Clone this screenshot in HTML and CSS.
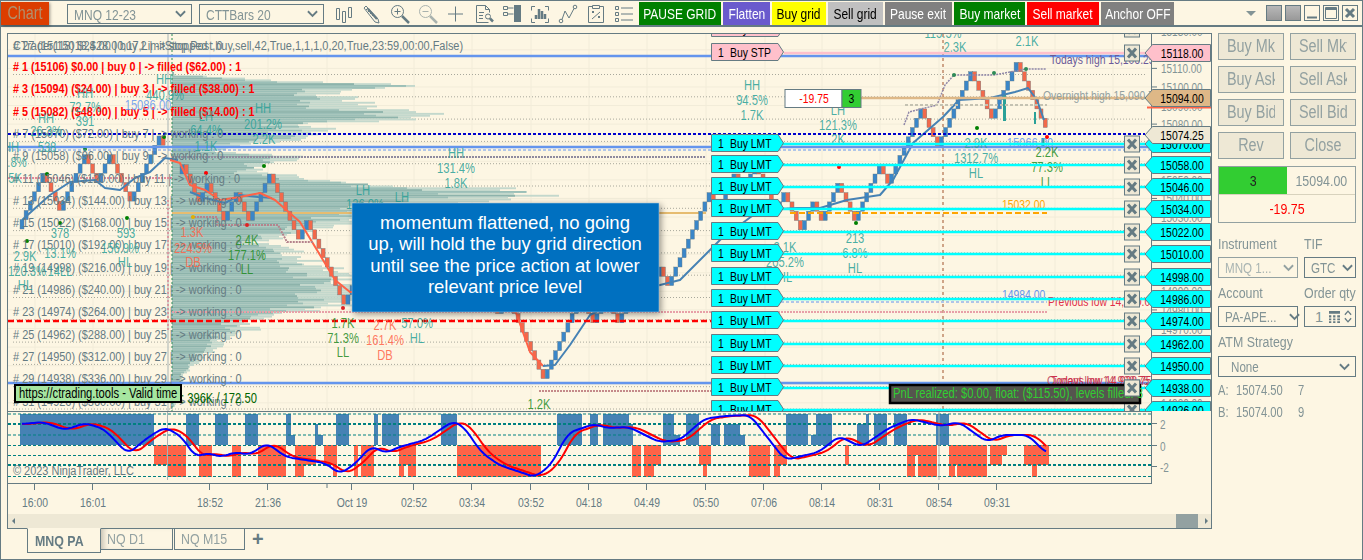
FILE: index.html
```html
<!DOCTYPE html>
<html lang="en">
<head>
    <meta charset="UTF-8">
    <title>MNQ 12-23 - Chart</title>
    <link rel="stylesheet" href="styles.css">
</head>
<body>
    <div class="window">
        <div class="toolbar">
            <div class="chart-tag"><span class="sq">Chart</span></div>
            <div class="select tool-select"><span class="sq sq-left">MNQ 12-23</span><svg class="chevron" viewBox="0 0 12 8"><path d="M1 1l5 5 5-5"/></svg></div>
            <div class="select tool-select"><span class="sq sq-left">CTTBars 20</span><svg class="chevron" viewBox="0 0 12 8"><path d="M1 1l5 5 5-5"/></svg></div>

            <div class="tool-icons">
                <svg viewBox="0 0 22 22"><path d="M3.5 5.5h3v11h-3zM9.5 8.5h3v11h-3zM15.5 4.5h3v10h-3z"/></svg>
                <svg viewBox="0 0 22 22"><path class="thick" d="M7 6l9 10"/><path d="M3 5l2-2 12 13 1 4-4-1zM5 7l2-2M7 9l2-2M9 11l2-2M11 13l2-2"/></svg>
                <svg viewBox="0 0 22 22"><circle cx="8.5" cy="8.5" r="6"/><path d="M5.5 8.5h6M8.5 5.5v6"/><path class="thick" d="M13 13l7 7"/></svg>
                <svg class="dim" viewBox="0 0 22 22"><circle cx="8.5" cy="8.5" r="6"/><path d="M5.5 8.5h6"/><path class="thick" d="M13 13l7 7"/></svg>
                <svg viewBox="0 0 22 22"><path d="M3 11h15M10.5 3.5v15"/></svg>
                <svg viewBox="0 0 22 22"><path d="M3.5 2.5h9l4 4v3M3.5 2.5v17h12M12.5 2.5v4h4M6 9.5h5M6 12.5h4M6 15.5h4"/><circle cx="15" cy="13.5" r="2.5"/><path class="thick" d="M17 15.5l3 3"/></svg>
                <svg viewBox="0 0 22 22"><path d="M2.5 3.5h4v3h-4zM2.5 9.5h4v3h-4zM6.5 5h6M6.5 11h6"/><path class="solid" d="M13 2h7v17h-7z"/></svg>
                <svg viewBox="0 0 22 22"><path d="M6 3.5H2.5v4M16 3.5h3.5v4M6 19.5H2.5v-4M16 19.5h3.5v-4"/><path class="thick" d="M7 16v-4M10 16V6M13 16V8M16 16v-5"/></svg>
                <svg viewBox="0 0 22 22"><circle cx="4" cy="18" r="1.8"/><circle cx="18" cy="4" r="1.8"/><path d="M5 16.5l3-8.5 4 7 5-9.5"/></svg>
                <svg viewBox="0 0 22 22"><path d="M7.5 3.5h-4v16h15v-16h-4M7.5 2.5h7v3h-7zM7 8l2 2M9 8l-2 2M13 13l2 2M15 13l-2 2M7 16l8-7"/></svg>
                <svg viewBox="0 0 22 22"><path d="M2.5 3.5h3v3h-3zM2.5 9.5h3v3h-3zM2.5 15.5h3v3h-3zM8 5h12M8 11h12M8 17h12"/></svg>
            </div>

            <div class="tool-buttons">
                <div class="tool-btn btn-pause"><span class="sq">PAUSE GRID</span></div>
                <div class="tool-btn btn-flatten"><span class="sq">Flatten</span></div>
                <div class="tool-btn btn-buygrid"><span class="sq">Buy grid</span></div>
                <div class="tool-btn btn-sellgrid"><span class="sq">Sell grid</span></div>
                <div class="tool-btn btn-exit"><span class="sq">Pause exit</span></div>
                <div class="tool-btn btn-buymkt"><span class="sq">Buy market</span></div>
                <div class="tool-btn btn-sellmkt"><span class="sq">Sell market</span></div>
                <div class="tool-btn btn-anchor"><span class="sq">Anchor OFF</span></div>
            </div>

            <div class="window-controls">
                <div class="menu-arrow"></div>
                <div class="win-btn win-gray"></div>
                <div class="win-btn win-gray"></div>
                <div class="win-btn"><svg viewBox="0 0 14 14"><path d="M2 11.5h10" stroke-width="2"/></svg></div>
                <div class="win-btn"><svg viewBox="0 0 14 14"><path d="M1.5 1.5h11v11h-11z"/><path d="M1.5 3h11" stroke-width="2"/></svg></div>
                <div class="win-btn"><svg viewBox="0 0 14 14"><path d="M3 3l8 8M11 3l-8 8" stroke-width="3"/></svg></div>
            </div>
        </div>

        <div class="workspace">
            <div class="chart-column">
                <div class="chart-panel">
                    <svg id="price-pane" class="pane" viewBox="8 34 1203 377" width="1203" height="377"></svg>
                    <svg id="indicator-pane" class="pane" viewBox="8 411 1203 73" width="1203" height="73"></svg>
                    <svg id="time-pane" class="pane" viewBox="8 484 1203 30" width="1203" height="30"></svg>
                    <div class="scrollbar">
                        <div class="scroll-arrow arrow-left"></div>
                        <div class="scroll-thumb"></div>
                        <div class="scroll-arrow arrow-right"></div>
                    </div>
                </div>
                <div class="tabs">
                    <div class="tab tab-active"><span class="sq sq-left">MNQ PA</span></div>
                    <div class="tab tab-second"><span class="sq sq-left">NQ D1</span></div>
                    <div class="tab tab-third"><span class="sq sq-left">NQ M15</span></div>
                    <div class="tab-add">+</div>
                </div>
            </div>

            <div class="side-panel">
                <div class="order-buttons">
                    <div class="order-btn"><span class="order-label"><span class="sq sq-left">Buy Mkt</span></span></div>
                    <div class="order-btn"><span class="order-label"><span class="sq sq-left">Sell Mkt</span></span></div>
                    <div class="order-btn"><span class="order-label"><span class="sq sq-left">Buy Ask</span></span></div>
                    <div class="order-btn"><span class="order-label"><span class="sq sq-left">Sell Ask</span></span></div>
                    <div class="order-btn"><span class="order-label"><span class="sq sq-left">Buy Bid</span></span></div>
                    <div class="order-btn"><span class="order-label"><span class="sq sq-left">Sell Bid</span></span></div>
                    <div class="order-btn order-big"><span class="sq">Rev</span></div>
                    <div class="order-btn order-big"><span class="sq">Close</span></div>
                </div>

                <div class="position-box">
                    <div class="position-row">
                        <div class="position-qty"><span class="sq">3</span></div>
                        <div class="position-price"><span class="sq">15094.00</span></div>
                    </div>
                    <div class="position-pnl"><span class="sq">-19.75</span></div>
                </div>

                <div class="field-row field-instrument">
                    <div class="field field-wide">
                        <label><span class="sq sq-left">Instrument</span></label>
                        <div class="select select-disabled"><span class="sq sq-left">MNQ 1...</span><svg class="chevron" viewBox="0 0 12 8"><path d="M1 1l5 5 5-5"/></svg></div>
                    </div>
                    <div class="field field-narrow">
                        <label><span class="sq sq-left">TIF</span></label>
                        <div class="select"><span class="sq sq-left">GTC</span><svg class="chevron" viewBox="0 0 12 8"><path d="M1 1l5 5 5-5"/></svg></div>
                    </div>
                </div>
                <div class="field-row">
                    <div class="field field-wide">
                        <label><span class="sq sq-left">Account</span></label>
                        <div class="select"><span class="sq sq-left">PA-APE...</span><svg class="chevron" viewBox="0 0 12 8"><path d="M1 1l5 5 5-5"/></svg></div>
                    </div>
                    <div class="field field-narrow">
                        <label><span class="sq sq-left">Order qty</span></label>
                        <div class="select qty-input">
                            <span class="qty-value">1</span>
                            <svg class="calc" viewBox="0 0 12 13"><path d="M0 0h12v3H0zM0 4.5h2.5V7H0zM4.5 4.5H7V7H4.5zM9 4.5h3V7H9zM0 8h2.5v2H0zM4.5 8H7v2H4.5zM9 8h3v2H9zM0 11h2.5v2H0zM4.5 11H7v2H4.5zM9 11h3v2H9z"/></svg>
                            <svg class="spin" viewBox="0 0 9 16"><path d="M1 6l3.5-4L8 6M1 10l3.5 4L8 10"/></svg>
                        </div>
                    </div>
                </div>
                <div class="field">
                    <label><span class="sq sq-left">ATM Strategy</span></label>
                    <div class="select select-atm"><span class="sq sq-left">None</span><svg class="chevron" viewBox="0 0 12 8"><path d="M1 1l5 5 5-5"/></svg></div>
                </div>

                <div class="quote"><span class="quote-side"><span class="sq sq-left">A:</span></span><span class="quote-price"><span class="sq sq-left">15074.50</span></span><span class="sq sq-left">7</span></div>
                <div class="quote"><span class="quote-side"><span class="sq sq-left">B:</span></span><span class="quote-price"><span class="sq sq-left">15074.00</span></span><span class="sq sq-left">9</span></div>
            </div>
        </div>
    </div>

    <script src="script.js"></script>
</body>
</html>
```

FILE: styles.css
```css
* {
    margin: 0;
    padding: 0;
    box-sizing: border-box;
}

body {
    background: #fdf6e3;
    color: #657b83;
    font-family: "Liberation Sans", sans-serif;
    overflow: hidden;
}

.window {
    width: 1363px;
    height: 560px;
    border: 1px solid #657b83;
    background: #fdf6e3;
    overflow: hidden;
}

/* the capture is squeezed sideways, so is all its text */
.sq {
    display: inline-block;
    flex-shrink: 0;
    white-space: nowrap;
    transform: scaleX(0.8);
}

.sq-left {
    transform-origin: left center;
}

/* toolbar */
.toolbar {
    height: 26px;
    border-bottom: 2px solid #657b83;
    display: flex;
    align-items: flex-start;
}

.chart-tag {
    width: 48px;
    height: 23px;
    margin-top: 1px;
    background: #dc3d00;
    color: #b0906e;
    font-size: 18px;
    line-height: 23px;
    display: flex;
    justify-content: center;
    box-shadow: 1px 1px 3px rgba(0, 0, 0, 0.4);
}

.select {
    display: flex;
    align-items: center;
    justify-content: space-between;
    border: 1px solid #657b83;
    font-size: 14.5px;
    color: #839496;
    padding: 0 5px 0 6px;
}

.tool-select {
    width: 125px;
    height: 20px;
    margin: 3px 0 0 7px;
    font-size: 15px;
}

.tool-select:nth-child(2) {
    margin-left: 18px;
}

.chevron {
    flex-shrink: 0;
    width: 11px;
    height: 8px;
    fill: none;
    stroke: #657b83;
    stroke-width: 2;
}

.tool-icons {
    display: flex;
    gap: 6px;
    margin: 2px 0 0 9px;
}

.tool-icons svg {
    width: 22px;
    height: 22px;
    fill: none;
    stroke: #657b83;
    stroke-width: 1;
}

.tool-icons svg.dim {
    opacity: 0.55;
}

.tool-icons .thick {
    stroke-width: 2.5;
}

.tool-icons .solid {
    fill: #657b83;
    stroke: none;
}

.tool-buttons {
    display: flex;
    gap: 2px;
    margin: 1px 0 0 4px;
}

.tool-btn {
    height: 23px;
    line-height: 23px;
    font-size: 15px;
    color: #fff;
    display: flex;
    justify-content: center;
}

.btn-pause { width: 82px; background: #008000; }
.btn-flatten { width: 47px; background: #6a5acd; }
.btn-buygrid { width: 54px; background: #ffff00; color: #000; }
.btn-sellgrid { width: 55px; background: #c0c0c0; color: #000; }
.btn-exit { width: 67px; background: #808080; }
.btn-buymkt { width: 71px; background: #008000; }
.btn-sellmkt { width: 72px; background: #ff0000; }
.btn-anchor { width: 73px; background: #808080; }

.window-controls {
    display: flex;
    align-items: center;
    gap: 3px;
    margin: 4px 0 0 auto;
    padding-right: 4px;
}

.menu-arrow {
    width: 0;
    height: 0;
    border-left: 5px solid transparent;
    border-right: 5px solid transparent;
    border-top: 5px solid #839496;
    margin-right: 7px;
}

.win-btn {
    width: 16px;
    height: 16px;
    border: 1px solid #657b83;
}

.win-btn svg {
    display: block;
    width: 14px;
    height: 14px;
    fill: none;
    stroke: #657b83;
}

.win-gray {
    background: linear-gradient(#b8b8b8, #999);
}

/* main area */
.workspace {
    display: flex;
    margin-top: 6px;
}

.chart-column {
    margin-left: 6px;
    width: 1205px;
}

.chart-panel {
    border: 1px solid #657b83;
    height: 496px;
}

.pane {
    display: block;
    font-family: "Liberation Sans", sans-serif;
}

.scrollbar {
    height: 14px;
    background: #eee8d5;
    display: flex;
    align-items: center;
}

.scroll-arrow {
    width: 0;
    height: 0;
    border-top: 3px solid transparent;
    border-bottom: 3px solid transparent;
}

.arrow-left {
    border-right: 3px solid #657b83;
    margin-left: 4px;
}

.arrow-right {
    border-left: 3px solid #657b83;
    margin: 0 3px 0 7px;
}

.scroll-thumb {
    width: 22px;
    height: 14px;
    background: #93a1a1;
    margin-left: auto;
}

.tabs {
    display: flex;
    margin: -1px 0 0 20px;
    font-size: 15.5px;
}

.tab {
    border: 1px solid #657b83;
    border-top-color: transparent;
    height: 22px;
    line-height: 20px;
    color: #93a1a1;
    padding-left: 6px;
}

.tab-active {
    width: 74px;
    height: 25px;
    line-height: 24px;
    padding-left: 7px;
    font-weight: bold;
    color: #657b83;
    background: #fdf6e3;
}

.tab-second {
    width: 72px;
    border-left: none;
    box-shadow: inset 6px 0 6px -4px rgba(0, 0, 0, 0.25);
}

.tab-third {
    width: 71px;
    margin-left: 1px;
}

.tab-add {
    margin-left: 7px;
    font-size: 20px;
    font-weight: bold;
    line-height: 22px;
}

/* right panel */
.side-panel {
    width: 138px;
    margin-left: 6px;
    font-size: 14px;
    color: #839496;
}

.order-buttons {
    display: grid;
    grid-template-columns: 66px 66px;
    grid-auto-rows: 27px;
    justify-content: space-between;
    row-gap: 6px;
}

.order-btn {
    border: 1px solid #93a1a1;
    background: #eee8d5;
    font-size: 18px;
    color: #93a1a1;
    display: flex;
    align-items: center;
    padding-left: 8px;
}

.order-label {
    display: block;
    width: 48px;
    overflow: hidden;
    white-space: nowrap;
}

.order-big {
    justify-content: center;
    padding-left: 0;
}

.position-box {
    margin-top: 7px;
    border: 1px solid #93a1a1;
    height: 57px;
}

.position-row {
    display: flex;
    height: 28px;
    border-bottom: 1px solid #d8d2bd;
    line-height: 27px;
    font-size: 15.5px;
}

.position-qty {
    width: 68px;
    background: #32cd32;
    color: #222;
    display: flex;
    justify-content: center;
}

.position-price {
    flex: 1;
    display: flex;
    justify-content: center;
}

.position-pnl {
    display: flex;
    justify-content: center;
    color: #ff0000;
    font-size: 15.5px;
    line-height: 28px;
}

.field-row {
    display: flex;
    justify-content: space-between;
}

.field-instrument {
    margin-top: 12px;
}

.field label {
    display: block;
    height: 22px;
    line-height: 17px;
    font-size: 15.5px;
}

.field {
    margin-bottom: 6px;
}

.field .select {
    height: 21px;
}

.field-wide {
    width: 80px;
}

.field-narrow {
    width: 52px;
}

.select-disabled {
    border-color: #93a1a1;
    color: #a9b4b2;
}

.select-disabled .chevron {
    stroke: #93a1a1;
}

.select-atm {
    padding-left: 12px;
    margin-top: 1px;
}

.qty-input {
    justify-content: flex-start;
    padding-right: 3px;
}

.qty-value {
    margin-left: 4px;
    flex: 1;
}

.calc {
    width: 11px;
    height: 12px;
    fill: #657b83;
    margin-right: 4px;
}

.spin {
    width: 8px;
    height: 15px;
    fill: none;
    stroke: #657b83;
    stroke-width: 1.5;
}

.quote {
    display: flex;
    height: 22px;
    line-height: 22px;
    font-size: 14px;
}

.field + .quote {
    margin-top: -4px;
}

.quote-side {
    width: 18px;
}

.quote-price {
    width: 62px;
}

/* chart svg text */
.row-text { fill: #657b83; font-size: 13.7px; }
.row-filled { fill: #ff0000; font-size: 13.5px; font-weight: bold; }
.tick-text { fill: #839496; font-size: 12.5px; }
.zz { font-size: 14px; text-anchor: middle; fill: #2aa198; fill-opacity: 0.85; }
.zz-green { fill: #228b22; }
.zz-orange { fill: #ff6347; }
.zz-blue { fill: #6495ed; }
.note { font-size: 13px; }
.note-big { font-size: 14px; }
.chip-text { font-size: 13px; fill: #000; }
.label-text { font-size: 13px; fill: #000; text-anchor: middle; }
.callout-text { font-size: 18.5px; fill: #fff; text-anchor: middle; }
.time-text { fill: #657b83; font-size: 13px; text-anchor: middle; }
```

FILE: script.js
```js
// builds the three chart panes from the price data

const ROW_H = 22.3;
const SQUEEZE = 0.8;

function priceY(p) {
    return 165 + (15058 - p) * 1.858;
}

function lerp(points, x) {
    if (x <= points[0][0]) return points[0][1];
    for (let i = 1; i < points.length; i++) {
        if (x <= points[i][0]) {
            const a = points[i - 1], b = points[i];
            return a[1] + (b[1] - a[1]) * (x - a[0]) / (b[0] - a[0]);
        }
    }
    return points[points.length - 1][1];
}

function rand(i) {
    const v = Math.sin(i * 12.9898) * 43758.5453;
    return v - Math.floor(v);
}

function line(x1, y1, x2, y2, color, width, dash) {
    return `<line x1="${x1}" y1="${y1}" x2="${x2}" y2="${y2}" stroke="${color}" stroke-width="${width}"${dash ? ` stroke-dasharray="${dash}"` : ''}/>`;
}

function poly(points, color, width, dash) {
    const d = points.map(p => p.join(',')).join(' ');
    return `<polyline points="${d}" fill="none" stroke="${color}" stroke-width="${width}" stroke-linejoin="round"${dash ? ` stroke-dasharray="${dash}"` : ''}/>`;
}

function text(x, y, s, cls, color) {
    return `<text transform="translate(${x} ${y}) scale(${SQUEEZE} 1)" class="${cls}"${color ? ` style="fill:${color}"` : ''}>${s}</text>`;
}

// --- price pane data ---
const pricePath = [
    [20, 229], [38, 192], [42, 180], [55, 210], [63, 190], [72, 170], [80, 160], [85, 163], [88, 173], [93, 183],
    [102, 163], [107, 170], [113, 190], [122, 210], [128, 193], [135, 180], [145, 160], [155, 152], [160, 143], [165, 155]
];
const pricePath2 = [
    [180, 183], [188, 207], [192, 195], [203, 183], [217, 213], [230, 185], [243, 217], [258, 175], [267, 187],
    [277, 217], [285, 237], [297, 220], [305, 222], [322, 268], [335, 300], [341, 305], [351, 270], [400, 285],
    [450, 265], [490, 285], [504, 312], [513, 340], [535, 385], [543, 365], [556, 335], [570, 312], [600, 312],
    [630, 300], [665, 280], [680, 255], [700, 215], [712, 205], [745, 180], [760, 180], [780, 205], [800, 215],
    [820, 215], [835, 185], [852, 218], [870, 190], [885, 175], [900, 130], [915, 118], [935, 135], [950, 90],
    [965, 75], [975, 105], [995, 105], [1012, 75], [1030, 90], [1045, 137]
];
const orangeMa = [
    [170, 160], [180, 163], [190, 185], [205, 190], [220, 200], [240, 197], [260, 193], [275, 200], [300, 222],
    [320, 255], [335, 280], [350, 292], [440, 290], [500, 290], [515, 310], [530, 352], [543, 366]
];
const blueMa = [
    [22, 220], [50, 195], [70, 182], [95, 180], [105, 188], [120, 190], [135, 178], [150, 172], [165, 158], [178, 160]
];
const blueMa2 = [[190, 192], [205, 198], [225, 203], [240, 195], [258, 197], [272, 198]];
const blueMa3 = [
    [543, 366], [555, 365], [570, 345], [590, 315], [640, 290], [680, 280], [720, 240], [760, 210], [797, 208],
    [820, 208], [847, 200], [880, 195], [893, 180], [913, 143], [943, 117], [959, 100], [990, 98], [1015, 92],
    [1028, 88], [1037, 100], [1044, 120]
];

const profileEdge = [
    [74, 175], [76, 225], [80, 300], [85, 480], [90, 340], [100, 370], [108, 410], [113, 470], [118, 480], [123, 330],
    [130, 340], [135, 345], [140, 290], [145, 240], [150, 220], [157, 330], [163, 290], [170, 262], [178, 335],
    [185, 440], [190, 640], [195, 600], [200, 560], [205, 450], [215, 420], [225, 380], [235, 300], [240, 270],
    [248, 300], [260, 330], [280, 380], [300, 400], [308, 340], [315, 280], [322, 250], [328, 268], [335, 235],
    [345, 225], [355, 210], [365, 195], [375, 185], [385, 183], [395, 178], [405, 175]
];

const rows = [
    '# 1 (15106) $0.00 | buy 0 | -> filled ($62.00) : 1',
    '# 3 (15094) ($24.00) | buy 3 | -> filled ($38.00) : 1',
    '# 5 (15082) ($48.00) | buy 5 | -> filled ($14.00) : 1',
    '# 7 (15070) ($72.00) | buy 7 | -> working : 0',
    '# 9 (15058) ($96.00) | buy 9 | -> working : 0',
    '# 11 (15046) ($120.00) | buy 11 | -> working : 0',
    '# 13 (15034) ($144.00) | buy 13 | -> working : 0',
    '# 15 (15022) ($168.00) | buy 15 | -> working : 0',
    '# 17 (15010) ($192.00) | buy 17 | -> working : 0',
    '# 19 (14998) ($216.00) | buy 19 | -> working : 0',
    '# 21 (14986) ($240.00) | buy 21 | -> working : 0',
    '# 23 (14974) ($264.00) | buy 23 | -> working : 0',
    '# 25 (14962) ($288.00) | buy 25 | -> working : 0',
    '# 27 (14950) ($312.00) | buy 27 | -> working : 0',
    '# 29 (14938) ($336.00) | buy 29 | -> working : 0',
    '# 31 (14926) ($360.00) | buy 31 | -> working : 0'
];

// [x, y, text, colour class]
const swingLabels = [
    [164, 84, 'HH'], [165, 100, '440.9%'], [85, 98, 'HH'], [85, 112, '72.7%'], [85, 126, '391'],
    [46, 123, 'HH'], [46, 136, '26.3%'], [47, 152, '538'], [11, 152, 'HH'], [17, 167, '.8%'], [15, 183, '5K'],
    [206, 121, 'LH'], [206, 135, '64.4%'], [206, 151, '1.1K'], [263, 113, 'HH'], [263, 129, '201.2%'], [264, 144, '2.2K'],
    [456, 158, 'HH'], [456, 173, '131.4%'], [456, 188, '1.8K'], [363, 195, 'LH'], [402, 202, 'LH'], [365, 209, '136.0%'],
    [60, 238, '378'], [126, 238, '593'], [25, 261, '2.9K'], [60, 258, '13.1%'], [120, 253, '156.9%'], [125, 267, 'HL'],
    [27, 276, '120.3%'], [60, 276, '14LL'], [25, 290, 'HL'],
    [192, 237, '1.3K', 'zz-orange'], [193, 253, '224.5%', 'zz-orange'], [193, 267, 'DB', 'zz-orange'],
    [247, 245, '2.4K', 'zz-green'], [247, 260, '177.1%', 'zz-green'], [247, 274, 'LL', 'zz-green'],
    [343, 328, '1.7K', 'zz-green'], [343, 343, '71.3%', 'zz-green'], [343, 357, 'LL', 'zz-green'],
    [385, 330, '2.7K', 'zz-orange'], [385, 345, '161.4%', 'zz-orange'], [385, 360, 'DB', 'zz-orange'],
    [417, 328, '57.0%'], [417, 343, 'HL'], [539, 409, '1.2K', 'zz-green'],
    [752, 90, 'HH'], [752, 105, '94.5%'], [752, 120, '1.7K'], [838, 115, 'LH'], [838, 130, '121.3%'], [838, 144, '2K'],
    [943, 38, '115.5%'], [955, 52, '2.3K'], [1027, 46, '2.1K'],
    [976, 148, '2.9K'], [976, 163, '1312.7%'], [976, 178, 'HL'], [1030, 148, '15066.00', 'zz-blue'], [148, 110, '15086.00', 'zz-blue'],
    [1047, 157, '2.2K', 'zz-green'], [1047, 172, '77.3%', 'zz-green'], [1047, 187, 'LL', 'zz-green'],
    [785, 252, '2.1K'], [785, 267, '205.2%'], [785, 282, 'HL'], [855, 243, '213'], [855, 258, '6.8%'], [855, 273, 'HL']
];

const dots = [
    [164, 137, '#008000'], [85, 149, '#008000'], [47, 174, '#008000'], [127, 218, '#008000'], [60, 223, '#008000'],
    [27, 241, '#008000'], [264, 166, '#008000'], [206, 173, '#ff0000'], [193, 217, '#e0b000'], [247, 225, '#dd2222'],
    [343, 308, '#dd2222'], [839, 167, '#ff0000'], [856, 223, '#008000'], [977, 128, '#008000'], [1047, 137, '#ff0000'],
    [954, 75, '#2e8b57'], [994, 73, '#2e8b57'], [1026, 69, '#2e8b57']
];

const gridX = [35, 93, 210, 268, 327, 414, 472, 531, 589, 647, 706, 765, 822, 880, 939, 997, 1055, 1113];

function drawBricks(path, startX, startY) {
    let out = '';
    let close = startY;
    let up = true;
    const last = path[path.length - 1][0];
    for (let x = startX; x <= last; x += 4.15) {
        const target = lerp(path, x);
        // only reverses once the price has moved a full brick against the run
        if (up && target > close + 9) up = false;
        else if (!up && target < close - 9) up = true;
        const next = up ? close - 9.3 : close + 9.3;
        const top = Math.min(close, next);
        out += `<rect x="${x.toFixed(1)}" y="${top.toFixed(1)}" width="4" height="9.3" fill="${up ? '#3a86c8' : '#f2694b'}" stroke="#657b83" stroke-width="0.4"/>`;
        close = next;
    }
    return out;
}

function drawProfile() {
    let out = '';
    let i = 0;
    for (let y = 72; y < 406; y += 1.86, i++) {
        const end = lerp(profileEdge, y) - 172;
        const light = end * (0.75 + 0.25 * rand(i));
        const dark = end * (0.55 + 0.25 * rand(i + 500));
        out += `<rect x="172" y="${y.toFixed(1)}" width="${light.toFixed(0)}" height="1.9" fill="#c3d8cc"/>`;
        out += `<rect x="172" y="${y.toFixed(1)}" width="${dark.toFixed(0)}" height="1.9" fill="${i % 3 ? '#9cbfb7' : '#8db3ab'}"/>`;
    }
    return out;
}

function chip(y, label, fill) {
    const t = y - 8.5, b = y + 8.5;
    return `<polygon points="711.5,${t} 778,${t} 783.5,${y} 778,${b} 711.5,${b}" fill="${fill}" stroke="#657b83"/>`
        + text(718, y + 5, '1', 'chip-text') + text(730, y + 5, label, 'chip-text');
}

function closeBox(y) {
    return `<rect x="1124.5" y="${y - 8}" width="15" height="16" fill="#eee8d5" stroke="#657b83"/>`
        + line(1128, y - 4.5, 1136, y + 4.5, '#657b83', 3) + line(1136, y - 4.5, 1128, y + 4.5, '#657b83', 3);
}

function priceLabel(y, value, fill) {
    const t = y - 8.5, b = y + 8.5;
    return `<polygon points="1145,${y} 1152.5,${t} 1210.5,${t} 1210.5,${b} 1152.5,${b}" fill="${fill}" stroke="#657b83"/>`
        + text(1182, y + 5, value, 'label-text');
}

function drawPricePane() {
    let o = '<clipPath id="plot"><rect x="8" y="34" width="1143" height="377"/></clipPath>';

    // grid
    gridX.forEach(x => { o += line(x, 34, x, 411, '#f2ecd9', 1); });
    for (let p = 15130; p >= 14920; p -= 10) {
        const y = priceY(p);
        o += line(8, y, 1151, y, '#f2ecd9', 1);
    }
    for (let i = 0; i < 16; i++) {
        const y = 74.5 + i * ROW_H;
        o += line(13, y, 1145, y, '#a8a89c', 1, '1 2');
    }

    o += drawProfile();

    // session lines
    o += line(168, 34, 168, 411, '#a9b4b4', 1);
    o += line(168, 200, 168, 330, '#e0607a', 1, '2 2');
    o += line(172, 34, 172, 411, '#2e8b57', 1, '2 2');
    o += line(943, 34, 943, 411, '#a0522d', 1, '3 3');

    // levels under the bars
    o += line(172, 213, 706, 213, '#e6bc70', 2);
    o += line(8, 178, 172, 178, '#e08a9a', 2, '2 1');
    o += line(172, 157, 706, 157, '#8f8a9e', 2, '2 1');
    o += line(172, 312, 1047, 312, '#e8a0a8', 2, '2 1');
    o += line(539, 391, 716, 391, '#c58a8a', 2, '2 1');

    o += drawBricks(pricePath, 20, 229);
    o += drawBricks(pricePath2, 180, 174);

    // teal wicks near the right edge
    o += line(1004.5, 95, 1004.5, 121, '#2aa198', 3);
    o += line(1035, 112, 1035, 124, '#2aa198', 2);
    o += line(1043, 138, 1043, 147, '#2aa198', 3);

    o += poly(blueMa, '#4682b4', 2);
    o += poly(blueMa2, '#4682b4', 2);
    o += poly(orangeMa, '#ff6347', 2);
    o += poly(blueMa3, '#4682b4', 2);
    o += poly([[191, 217], [217, 217], [217, 225], [278, 225], [287, 242], [313, 242]], '#b5838d', 2, '2 1');
    o += poly([[904, 125], [909, 112], [937, 105], [945, 85], [954, 75], [994, 75], [1026, 69], [1046, 69]], '#8f86a8', 1.5, '2 1');
    dots.forEach(d => { o += `<circle cx="${d[0]}" cy="${d[1]}" r="2" fill="${d[2]}"/>`; });

    // level lines
    o += line(860, 98, 1145, 98, '#deb887', 2.5);
    o += line(905, 105, 1047, 105, '#c4c2b2', 2, '3 2');
    o += line(8, 56, 1151, 56, '#6495ed', 2.5);
    o += line(8, 147, 1151, 147, '#6495ed', 2.5);
    o += line(8, 150, 1151, 150, '#6495ed', 1, '3 2');
    o += line(8, 383, 1151, 383, '#6495ed', 2.5);
    o += line(8, 134, 1145, 134, '#0000cd', 2, '3 2');
    o += line(8, 321, 711, 321, '#ff0000', 2.5, '6 3');
    o += line(790, 213, 1047, 213, '#ffa500', 2, '6 3');
    o += line(711, 302, 1047, 302, '#6495ed', 1, '3 2');

    // header text
    o += text(13, 50, 'CTrader(15018,$28.00,17,LimitStop,Post,buy,sell,42,True,1,1,1,0,20,True,23:59,00:00,False)', 'row-text');
    o += text(13, 50, '# 27 (15118) $24.00 | buy 2 | -&gt; stopped : 0', 'row-text');

    // order rows
    rows.forEach((r, i) => {
        const cls = i < 3 ? 'row-filled' : 'row-text';
        o += text(13, 71 + i * ROW_H, r.replace(/->/g, '-&gt;'), cls);
    });

    o += '<g clip-path="url(#plot)">';
    swingLabels.forEach(s => { o += text(s[0], s[1], s[2], 'zz ' + (s[3] || '')); });

    // right side notes
    o += text(1050, 64, 'Todays high 15,106.25', 'note', '#6a5a9a');
    o += text(1043, 100, 'Overnight high 15,090.75', 'note', '#93a1a1');
    o += text(1002, 209, '15032.00', 'note', '#ffa500');
    o += text(1002, 299, '14984.00', 'note', '#6495ed');
    o += text(1048, 306, 'Previous low 14,880.00', 'note', '#e0304a');
    o += text(1047, 385, 'Current low 14,928.75', 'note', '#c0556a');
    o += text(1051, 385, 'Todays low 14,928.75', 'note', '#d0304a');
    o += '</g>';

    // cyan order lines and chips
    const stopY = [29, 53];
    const limitY = [144, 165, 187, 209, 232, 254, 277, 299, 321, 344, 366, 388, 410];
    o += line(784, 53, 1145, 53, '#ffc0cb', 2.5);
    limitY.forEach(y => { o += line(782, y, 1145, y, '#00ffff', 2.5); });

    // callout
    o += `<rect x="352" y="203" width="307" height="109" fill="#0070c0" stroke="#b8cfe0" stroke-width="0.5" filter="drop-shadow(2px 2px 3px rgba(0,0,0,.4))"/>`;
    const note = ['momentum flattened, no going', 'up, will hold the buy grid direction', 'until see the price action at lower', 'relevant price level'];
    note.forEach((n, i) => {
        o += `<text x="505" y="${229 + i * 21.4}" class="callout-text">${n}</text>`;
    });

    stopY.forEach(y => { o += chip(y - 1, 'Buy STP', '#ffc0cb'); });
    limitY.forEach(y => { o += chip(y - 1, 'Buy LMT', '#00ffff'); });

    // price axis
    o += line(1151.5, 34, 1151.5, 411, '#657b83', 1);
    for (let p = 15130; p >= 14920; p -= 10) {
        const y = priceY(p);
        o += line(1151, y, 1157, y, '#657b83', 1);
        o += text(1161, y + 5, p.toFixed(2), 'tick-text');
    }
    stopY.forEach(y => { o += closeBox(y); });
    o += priceLabel(53, '15118.00', '#ffc0cb');
    o += line(1147, 107.5, 1211, 107.5, '#ff6347', 2);
    o += priceLabel(98, '15094.00', '#deb887');
    limitY.forEach((y, i) => {
        o += closeBox(y);
        o += priceLabel(y, (15070 - i * 12).toFixed(2), '#00ffff');
    });
    o += priceLabel(135, '15074.25', '#eee8d5');

    // pnl flag
    o += `<rect x="785" y="89.5" width="57" height="18" fill="#fff" stroke="#657b83"/>`;
    o += `<rect x="842" y="89.5" width="19" height="18" fill="#32cd32" stroke="#657b83"/>`;
    o += text(814, 103, '-19.75', 'label-text', '#ff0000');
    o += text(851.5, 103, '3', 'label-text');

    // status boxes
    o += `<rect x="890" y="385" width="250" height="18" fill="#55554e" stroke="#000" stroke-width="2.5"/>`;
    o += text(893, 398, 'PnL realized: $0.00, float: ($115.50), levels filled: 3', 'note-big', '#32cd32');
    o += closeBox(388);
    o += `<rect x="15" y="385" width="166" height="17" fill="#a6e6a0" stroke="#000" stroke-width="2"/>`;
    o += text(19, 398, 'https://ctrading.tools - Valid time', 'note-big', '#000');
    o += text(181, 403, ': 396K / 172.50', 'note-big', '#006400');

    document.getElementById('price-pane').innerHTML = o;
}

// --- indicator pane ---
const blueBars = [
    [20, 154, 414], [186, 199, 414], [215, 228, 414], [245, 258, 414], [286, 291, 414], [291, 295, 435], [315, 318, 424],
    [318, 323, 435], [336, 349, 414], [374, 378, 414], [382, 399, 414], [441, 457, 414], [557, 582, 414], [590, 598, 414],
    [603, 629, 414], [629, 633, 424], [663, 674, 414], [674, 680, 435], [686, 699, 414], [711, 720, 424], [724, 740, 424],
    [740, 745, 435], [786, 808, 414], [811, 816, 435], [816, 832, 414], [857, 866, 424], [866, 869, 414], [874, 887, 414],
    [894, 907, 414], [936, 949, 414]
];
const redBars = [
    [154, 167, 465], [154, 178, 455], [178, 186, 477], [167, 178, 477], [199, 212, 477], [232, 241, 477], [258, 286, 477],
    [295, 304, 477], [304, 316, 465], [324, 337, 465], [333, 337, 477], [354, 358, 477], [361, 374, 477], [399, 404, 477],
    [404, 408, 465], [408, 416, 477], [457, 541, 477], [632, 641, 477], [644, 654, 477], [654, 661, 465], [699, 711, 465],
    [703, 707, 477], [749, 770, 477], [774, 780, 477], [780, 787, 465], [845, 849, 465], [907, 915, 477], [915, 918, 455],
    [918, 937, 477], [949, 955, 477], [955, 957, 465], [957, 987, 477], [990, 995, 465], [995, 1002, 465], [1002, 1007, 455],
    [1024, 1049, 465], [1032, 1037, 477]
];
const blueOsc = [
    [22, 424], [43, 422], [65, 430], [85, 423], [104, 429], [128, 454], [147, 438], [165, 427], [182, 437], [195, 457],
    [208, 453], [221, 457], [236, 452], [249, 455], [267, 443], [286, 457], [325, 463], [340, 474], [356, 463], [371, 446],
    [386, 453], [399, 447], [425, 440], [453, 421], [464, 427], [481, 452], [499, 465], [535, 477], [551, 465], [568, 433],
    [594, 424], [607, 428], [629, 427], [659, 442], [680, 440], [704, 419], [724, 416], [750, 415], [785, 460], [819, 452],
    [839, 436], [861, 447], [889, 428], [911, 419], [941, 426], [959, 422], [987, 442], [1002, 435], [1028, 435], [1046, 453]
];

function smoothPath(points) {
    let out = [];
    for (let x = points[0][0]; x <= points[points.length - 1][0]; x += 2) {
        let sum = 0;
        for (let k = -3; k <= 3; k++) sum += lerp(points, x + k * 2);
        out.push([x, (sum / 7).toFixed(1)]);
    }
    return out;
}

function laggedPath(points) {
    let out = [];
    for (let x = points[0][0]; x <= points[points.length - 1][0]; x += 2) {
        let sum = 0;
        for (let k = 0; k < 8; k++) sum += lerp(points, x - k * 2);
        out.push([x, (sum / 8).toFixed(1)]);
    }
    return out;
}

function drawIndicatorPane() {
    let o = '';
    blueBars.forEach(b => {
        o += `<rect x="${b[0]}" y="${b[2]}" width="${b[1] - b[0]}" height="${445 - b[2]}" fill="#4682b4"/>`;
    });
    redBars.forEach(b => {
        o += `<rect x="${b[0]}" y="445" width="${b[1] - b[0]}" height="${b[2] - 445}" fill="#ff6347"/>`;
    });
    [[414, 1], [424, 2], [435, 1], [445.5, 1], [455.5, 1], [465, 2], [476.5, 1]].forEach(l => {
        o += line(8, l[0], 1151, l[0], '#008080', l[1], '3 2');
    });
    o += line(167.5, 411, 167.5, 480, '#a9b4b4', 1);
    o += line(939, 411, 939, 480, '#a9b4b4', 1);
    o += text(13, 475, '© 2023 NinjaTrader, LLC', 'row-text');

    o += poly(laggedPath(blueOsc), '#ff0000', 2);
    o += poly(smoothPath(blueOsc), '#0000ff', 2);

    o += line(8, 411.5, 1151, 411.5, '#657b83', 1);
    o += line(8, 483.5, 1151, 483.5, '#657b83', 1);
    o += line(1151.5, 411, 1151.5, 484, '#657b83', 1);
    [[424, '2'], [446, '0'], [467, '-2']].forEach(t => {
        o += line(1151, t[0] - 0.5, 1157, t[0] - 0.5, '#657b83', 1);
        o += text(1160, t[0] + 5, t[1], 'tick-text');
    });
    document.getElementById('indicator-pane').innerHTML = o;
}

// --- time axis ---
function drawTimePane() {
    const times = [
        [35, '16:00'], [93, '16:01'], [210, '18:52'], [268, '21:36'], [352, 'Oct 19'], [414, '02:52'], [472, '03:34'], [531, '03:52'],
        [589, '04:18'], [647, '04:49'], [706, '05:50'], [764, '07:06'], [822, '08:14'], [880, '08:31'], [939, '08:54'], [997, '09:31']
    ];
    let o = '';
    times.forEach(t => {
        o += line(t[0] - 0.5, 484, t[0] - 0.5, 490, '#657b83', 1);
        o += text(t[0], 507, t[1], 'time-text');
    });
    o += line(327, 484, 327, 488, '#657b83', 1);
    document.getElementById('time-pane').innerHTML = o;
}

drawPricePane();
drawIndicatorPane();
drawTimePane();
```
